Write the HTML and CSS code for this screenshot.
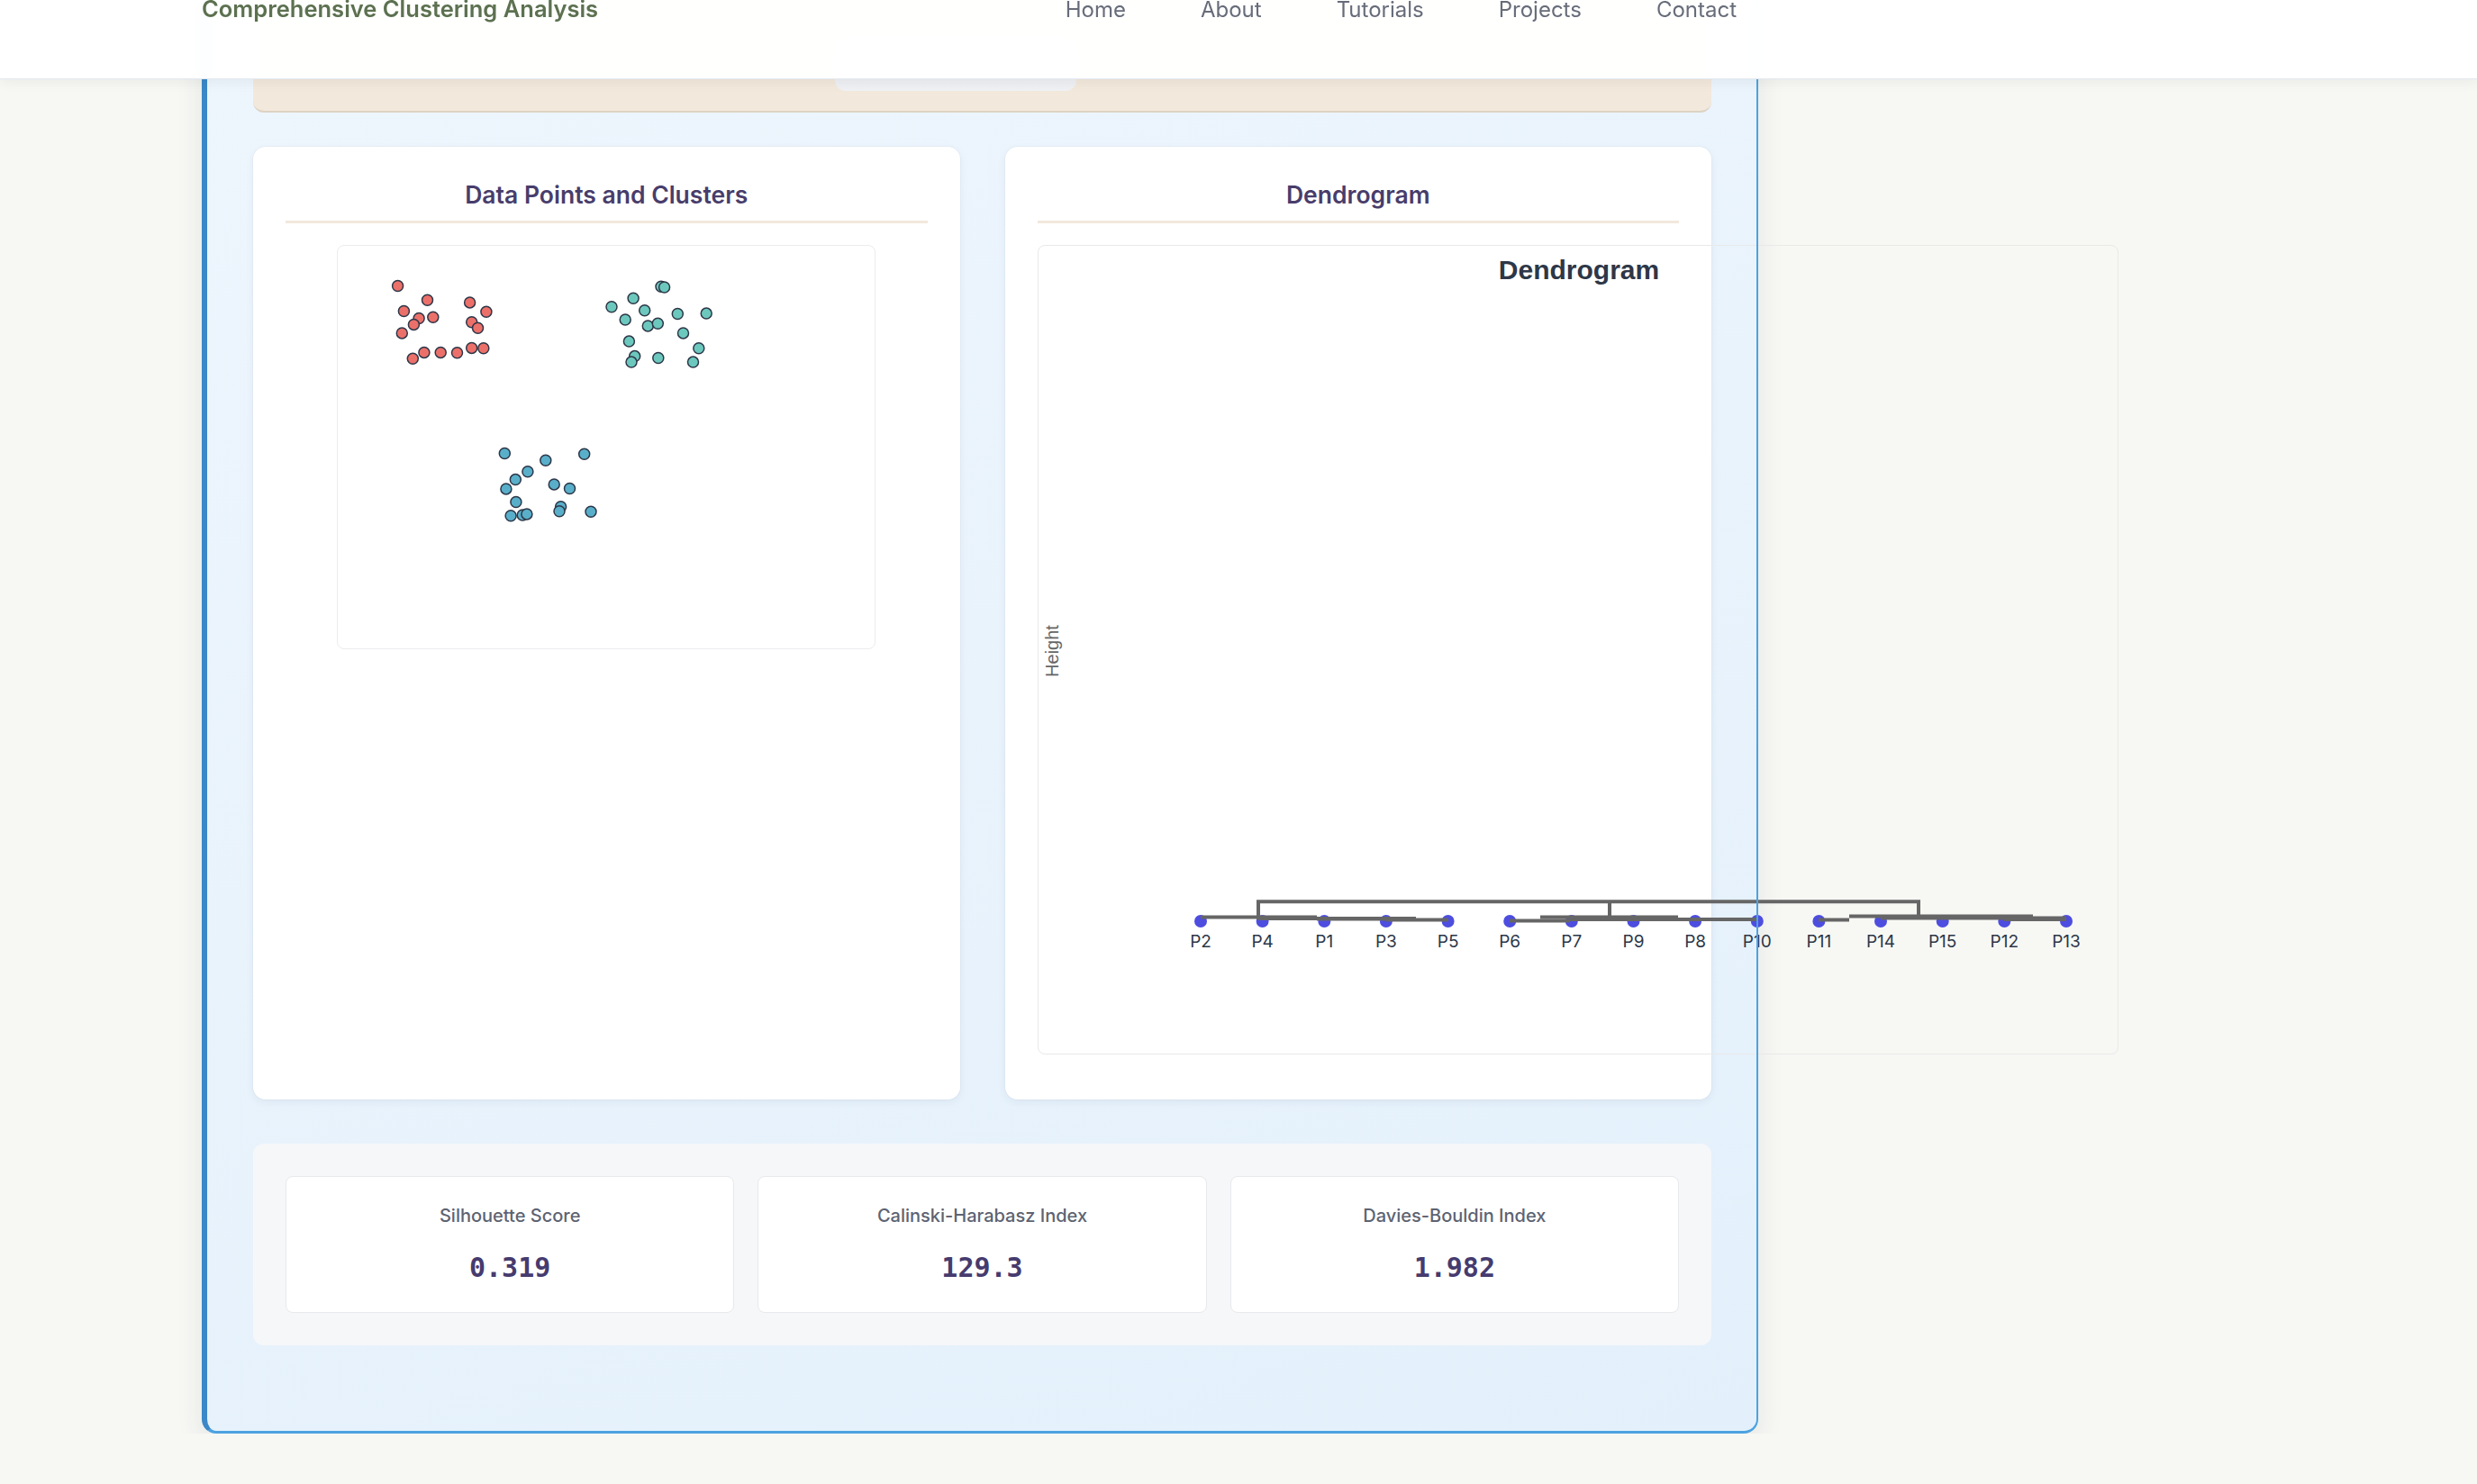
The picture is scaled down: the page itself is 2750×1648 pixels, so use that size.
FILE: index.html
```html
<!DOCTYPE html>
<html lang="en">
<head>
<meta charset="utf-8">
<title>Comprehensive Clustering Analysis</title>
<link rel="stylesheet" href="styles.css">
</head>
<body>
<header class="site-header">
  <div class="header-inner">
    <div class="brand">Comprehensive Clustering Analysis</div>
    <nav class="nav">
      <a href="#">Home</a>
      <a href="#">About</a>
      <a href="#">Tutorials</a>
      <a href="#">Projects</a>
      <a href="#">Contact</a>
    </nav>
  </div>
</header>

<main class="page">
  <section class="analysis">
    <div class="controls">
      <div class="control-btn"></div>
    </div>

    <div class="charts">
      <div class="card">
        <h3 class="card-title">Data Points and Clusters</h3>
        <div class="plot-wrap">
          <svg class="scatter" viewBox="0 0 596 447" xmlns="http://www.w3.org/2000/svg">
            <g class="pts red">
              <circle cx="66.6" cy="44.5" r="6"/>
              <circle cx="99.5" cy="60.2" r="6"/>
              <circle cx="73.4" cy="72.5" r="6"/>
              <circle cx="90.1" cy="80.5" r="6"/>
              <circle cx="105.8" cy="79.3" r="6"/>
              <circle cx="84.4" cy="87.4" r="6"/>
              <circle cx="71.3" cy="96.9" r="6"/>
              <circle cx="146.6" cy="62.9" r="6"/>
              <circle cx="164.9" cy="73.2" r="6"/>
              <circle cx="148.7" cy="84.7" r="6"/>
              <circle cx="155.5" cy="91.2" r="6"/>
              <circle cx="83.3" cy="125.3" r="6"/>
              <circle cx="95.9" cy="118.4" r="6"/>
              <circle cx="114.2" cy="118.4" r="6"/>
              <circle cx="132.5" cy="118.8" r="6"/>
              <circle cx="148.7" cy="113.4" r="6"/>
              <circle cx="161.8" cy="113.8" r="6"/>
            </g>
            <g class="pts teal">
              <circle cx="359" cy="45.3" r="6"/>
              <circle cx="362.6" cy="46" r="6"/>
              <circle cx="328.1" cy="58.3" r="6"/>
              <circle cx="304" cy="67.8" r="6"/>
              <circle cx="340.7" cy="71.7" r="6"/>
              <circle cx="319.2" cy="82" r="6"/>
              <circle cx="377.3" cy="75.5" r="6"/>
              <circle cx="409.2" cy="75.1" r="6"/>
              <circle cx="344.3" cy="88.9" r="6"/>
              <circle cx="355.3" cy="86.2" r="6"/>
              <circle cx="383.5" cy="96.9" r="6"/>
              <circle cx="323.4" cy="106.1" r="6"/>
              <circle cx="400.8" cy="113.8" r="6"/>
              <circle cx="329.7" cy="122.6" r="6"/>
              <circle cx="326" cy="129.1" r="6"/>
              <circle cx="355.8" cy="124.5" r="6"/>
              <circle cx="394.5" cy="129.1" r="6"/>
            </g>
            <g class="pts blue">
              <circle cx="185.3" cy="230.5" r="6"/>
              <circle cx="230.8" cy="238.2" r="6"/>
              <circle cx="273.7" cy="231.3" r="6"/>
              <circle cx="210.9" cy="250.8" r="6"/>
              <circle cx="197.3" cy="259.6" r="6"/>
              <circle cx="186.9" cy="269.9" r="6"/>
              <circle cx="240.2" cy="264.9" r="6"/>
              <circle cx="257.5" cy="269.5" r="6"/>
              <circle cx="197.9" cy="284.5" r="6"/>
              <circle cx="247.6" cy="289.8" r="6"/>
              <circle cx="246" cy="294.8" r="6"/>
              <circle cx="281" cy="295.2" r="6"/>
              <circle cx="192.1" cy="299.8" r="6"/>
              <circle cx="205.2" cy="299" r="6"/>
              <circle cx="209.9" cy="297.9" r="6"/>
            </g>
          </svg>
        </div>
      </div>

      <div class="card">
        <h3 class="card-title">Dendrogram</h3>
        <svg class="dendro" viewBox="0 0 1198 897" xmlns="http://www.w3.org/2000/svg">
          <text class="d-title" x="600" y="37" text-anchor="middle">Dendrogram</text>
          <text class="d-axis" transform="rotate(-90)" x="-450" y="22" text-anchor="middle">Height</text>
          <g class="leaf-dots">
            <circle cx="180" cy="750" r="7"/>
            <circle cx="248.6" cy="750" r="7"/>
            <circle cx="317.3" cy="750" r="7"/>
            <circle cx="385.9" cy="750" r="7"/>
            <circle cx="454.6" cy="750" r="7"/>
            <circle cx="523.2" cy="750" r="7"/>
            <circle cx="591.8" cy="750" r="7"/>
            <circle cx="660.5" cy="750" r="7"/>
            <circle cx="729.1" cy="750" r="7"/>
            <circle cx="797.8" cy="750" r="7"/>
            <circle cx="866.4" cy="750" r="7"/>
            <circle cx="935" cy="750" r="7"/>
            <circle cx="1003.7" cy="750" r="7"/>
            <circle cx="1072.3" cy="750" r="7"/>
            <circle cx="1141" cy="750" r="7"/>
          </g>
          <g class="links">
            <path d="M244,748 V728.3 H977 V745"/>
            <path d="M634,728.3 V745.5"/>
            <path d="M180,745.5 H309"/>
            <path d="M244,747 H419"/>
            <path d="M309,747.5 H385"/>
            <path d="M386,748.5 H455"/>
            <path d="M523,749.5 H590"/>
            <path d="M557,745.5 H710"/>
            <path d="M590,748 H660"/>
            <path d="M660,748 H798"/>
            <path d="M866,748.5 H900"/>
            <path d="M900,744.5 H1104"/>
            <path d="M935,746.5 H1054"/>
            <path d="M1054,746.5 H1141"/>
            <path d="M1072,748 H1141"/>
          </g>
          <g class="leaf-labels">
            <text x="180" y="779">P2</text>
            <text x="248.6" y="779">P4</text>
            <text x="317.3" y="779">P1</text>
            <text x="385.9" y="779">P3</text>
            <text x="454.6" y="779">P5</text>
            <text x="523.2" y="779">P6</text>
            <text x="591.8" y="779">P7</text>
            <text x="660.5" y="779">P9</text>
            <text x="729.1" y="779">P8</text>
            <text x="797.8" y="779">P10</text>
            <text x="866.4" y="779">P11</text>
            <text x="935" y="779">P14</text>
            <text x="1003.7" y="779">P15</text>
            <text x="1072.3" y="779">P12</text>
            <text x="1141" y="779">P13</text>
          </g>
        </svg>
      </div>
    </div>

    <div class="metrics">
      <div class="metric">
        <div class="metric-label">Silhouette Score</div>
        <div class="metric-value">0.319</div>
      </div>
      <div class="metric">
        <div class="metric-label">Calinski-Harabasz Index</div>
        <div class="metric-value">129.3</div>
      </div>
      <div class="metric">
        <div class="metric-label">Davies-Bouldin Index</div>
        <div class="metric-value">1.982</div>
      </div>
    </div>
  </section>
</main>
</body>
</html>
```

FILE: styles.css
```css
* { box-sizing: border-box; }

html, body {
  margin: 0;
  padding: 0;
}

body {
  background: #f7f8f4;
  font-family: Inter, "Noto Sans", "Liberation Sans", sans-serif;
  color: #2d3748;
  overflow: hidden;
}

/* ---------- header ---------- */
.site-header {
  position: fixed;
  top: 0;
  left: 0;
  right: 0;
  height: 88px;
  background: rgba(255, 255, 255, 0.97);
  backdrop-filter: blur(8px);
  border-bottom: 1px solid #e3e9f1;
  box-shadow: 0 3px 14px rgba(0, 0, 0, 0.06);
  z-index: 10;
  overflow: hidden;
}

.header-inner {
  margin-left: 224px;
  width: 1704px;
  margin-top: -5px;
  display: flex;
  justify-content: space-between;
  align-items: baseline;
}

.brand {
  font-size: 25.5px;
  line-height: 30px;
  font-weight: 600;
  color: #5c7150;
}

.nav {
  display: flex;
  gap: 83px;
}

.nav a {
  font-size: 24px;
  line-height: 30px;
  color: #676c79;
  text-decoration: none;
}

/* ---------- main container ---------- */
.page {
  padding-left: 224px;
}

.analysis {
  position: relative;
  width: 1728px;
  margin-top: -85px;
  padding: 50px 52px 98px 57px;
  background: linear-gradient(160deg, #eef6fd 0%, #e9f3fc 50%, #e3f0fb 100%);
  border-radius: 0 0 16px 16px;
  box-shadow: 0 12px 30px rgba(40, 60, 80, 0.09);
}

.analysis::after {
  content: "";
  position: absolute;
  inset: 0;
  border-left: 6px solid #3b87c8;
  border-right: 2px solid #4ca2e0;
  border-bottom: 3px solid #4ca2e0;
  border-radius: 0 0 16px 16px;
  pointer-events: none;
}

/* beige control panel (mostly scrolled under header) */
.controls {
  height: 160px;
  background: #f2e8dc;
  border-bottom: 2px solid #ddd3c3;
  border-radius: 12px;
  display: flex;
  justify-content: center;
  align-items: flex-end;
  padding-bottom: 22px;
}

.control-btn {
  width: 268px;
  height: 60px;
  margin-right: 59px;
  background: linear-gradient(#e6e8ec, #f0f1f4);
  border-radius: 12px;
}

/* ---------- chart cards ---------- */
.charts {
  display: grid;
  grid-template-columns: minmax(0, 1fr) minmax(0, 1fr);
  gap: 50px;
  margin-top: 38px;
}

.card {
  min-width: 0;
  background: #ffffff;
  border-radius: 14px;
  padding: 36px 36px 50px;
  box-shadow: 0 0 0 1px rgba(0, 0, 0, 0.025), 0 3px 10px rgba(30, 50, 90, 0.06);
}

.card-title {
  margin: 0 0 24px;
  padding-bottom: 11px;
  font-size: 26.5px;
  line-height: 35px;
  font-weight: 600;
  color: #483d6b;
  text-align: center;
  border-bottom: 3px solid #f2e8dc;
}

.plot-wrap {
  display: flex;
  justify-content: center;
}

.scatter {
  display: block;
  width: 598px;
  height: 449px;
  border: 1px solid #ececee;
  border-radius: 8px;
  background: #ffffff;
}

.pts circle {
  stroke: #2d3748;
  stroke-width: 1.5;
}

.red circle { fill: #ec706a; }
.teal circle { fill: #6cc8bd; }
.blue circle { fill: #59afca; }

.dendro {
  display: block;
  width: 1200px;
  height: 899px;
  border: 1px solid #e9e9e9;
  border-radius: 8px;
  overflow: visible;
}

.d-title {
  font-family: "Liberation Sans", Arial, sans-serif;
  font-size: 30px;
  font-weight: 700;
  fill: #2d3748;
}

.d-axis {
  font-family: "Liberation Sans", Arial, sans-serif;
  font-size: 20px;
  fill: #666666;
}

.leaf-dots circle {
  fill: #4d4de0;
}

.links path {
  fill: none;
  stroke: #666666;
  stroke-width: 4;
}

.leaf-labels text {
  font-family: Inter, "Liberation Sans", Arial, sans-serif;
  font-size: 19px;
  fill: #2d3748;
  text-anchor: middle;
}

/* ---------- metrics ---------- */
.metrics {
  margin-top: 49px;
  padding: 36px;
  background: #f6f7f9;
  border-radius: 12px;
  display: grid;
  grid-template-columns: repeat(3, minmax(0, 1fr));
  gap: 26px;
}

.metric {
  background: #ffffff;
  border: 1px solid #e8e9ed;
  border-radius: 8px;
  padding: 29px 20px 31px;
  text-align: center;
}

.metric-label {
  font-size: 20px;
  line-height: 28.5px;
  font-weight: 500;
  color: #5d6372;
  margin-bottom: 25px;
}

.metric-value {
  font-family: "DejaVu Sans Mono", "Liberation Mono", monospace;
  font-size: 30px;
  line-height: 36px;
  font-weight: 700;
  color: #463b6e;
}
```
